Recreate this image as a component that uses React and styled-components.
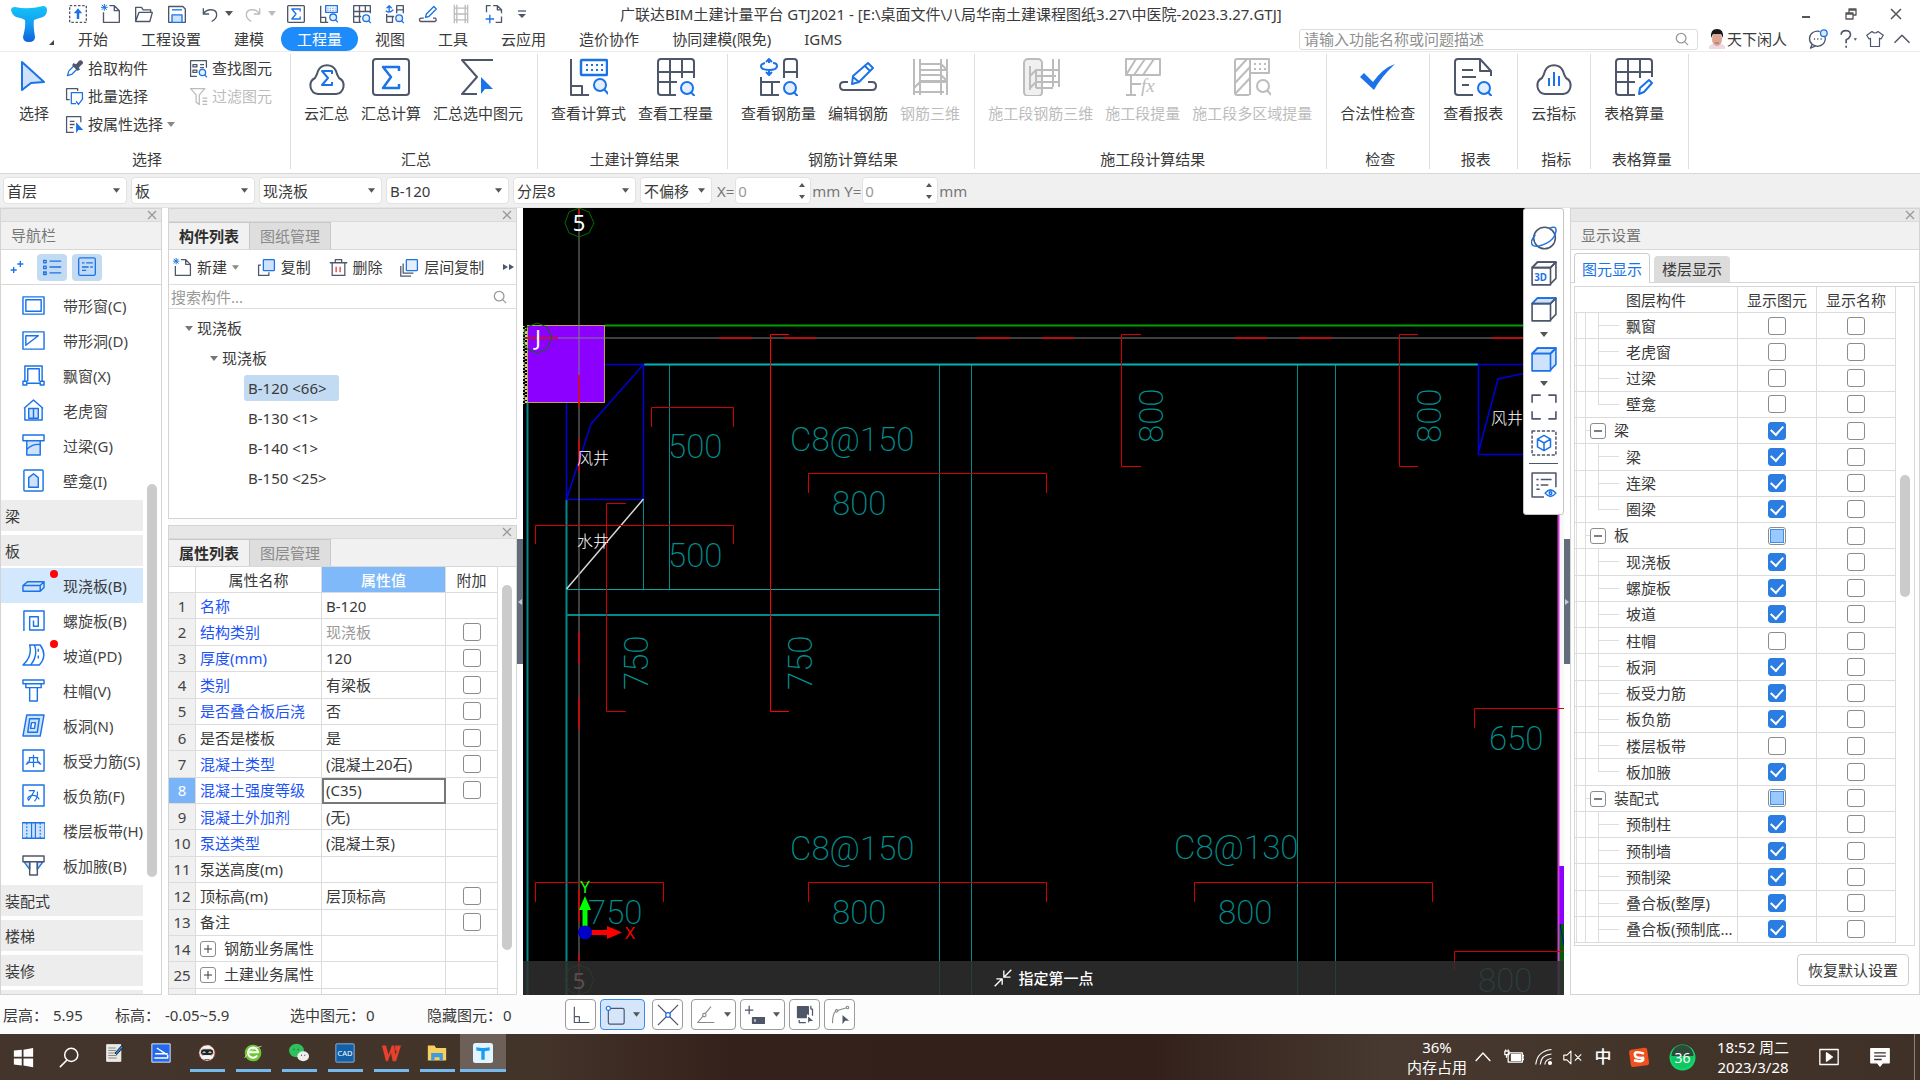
import React from 'react';
import styled, { createGlobalStyle, css } from 'styled-components';

const INK = '#4e566a';
const BLUE = '#1a73e8';
const PALE = '#cfe2fb';
const MUTED = '#bcbcbc';

const GlobalStyle = createGlobalStyle`
  * { box-sizing: border-box; }
  body {
    margin: 0;
    background: #fcfcfc;
    color: #3a3a3a;
    font-family: "Noto Sans", "Noto Sans CJK SC", sans-serif;
    font-size: 15px;
    line-height: 20px;
  }
  button, input, select {
    font: inherit;
    color: inherit;
    margin: 0;
    padding: 0;
    border: 0;
    background: none;
  }
  svg { display: block; flex: none; }
`;

/* ---------- layout ---------- */

const Page = styled.div`
  height: 100vh;
  display: flex;
  flex-direction: column;
  overflow: hidden;
`;

const Header = styled.header`
  display: flex;
  background: #fff;
  border-bottom: 1px solid #ececec;
`;

const LogoButton = styled.button`
  width: 62px;
  height: 51px;
  display: flex;
  align-items: flex-end;
  justify-content: flex-end;
  padding: 0 8px 6px 10px;
`;

const HeaderRows = styled.div`
  flex: 1;
  min-width: 0;
`;

const TitleRow = styled.div`
  height: 27px;
  display: grid;
  grid-template-columns: 558px 1fr 140px;
  align-items: center;
`;

const QuickBar = styled.div`
  display: flex;
  align-items: center;
  height: 24px;
  padding-left: 6px;
`;

const QuickButton = styled.button`
  width: ${p => (p.$w || 33)}px;
  height: 24px;
  display: flex;
  align-items: center;
  color: ${p => (p.$off ? MUTED : INK)};
`;

const WindowTitle = styled.div`
  white-space: nowrap;
`;

const WindowButtons = styled.div`
  display: flex;
  justify-content: space-between;
  padding: 0 18px 0 20px;
  color: #555;
`;

const MenuRow = styled.div`
  height: 24px;
  display: flex;
  align-items: center;
  gap: 1px;
`;

const MenuTab = styled.button`
  height: 24px;
  padding: 0 16px;
  border-radius: 12px;
  white-space: nowrap;
  ${p => p.$active && css`
    background: #1e8bfb;
    color: #fff;
  `}
`;

const UserArea = styled.div`
  display: flex;
  align-items: center;
  margin-left: auto;
  padding-right: 9px;
  color: ${INK};
`;

const SearchBox = styled.label`
  width: 399px;
  height: 21px;
  margin-right: 11px;
  display: flex;
  align-items: center;
  padding: 0 8px 0 4px;
  border: 1px solid #dcdcdc;
  border-radius: 3px;
  color: #999;
  input { flex: 1; outline: 0; }
  input::placeholder { color: #8f8f8f; }
`;

const UserName = styled.a`
  display: flex;
  align-items: center;
  gap: 2px;
  margin-right: 21px;
  color: #3a3a3a;
  text-decoration: none;
`;

const UserIcons = styled.div`
  display: flex;
  align-items: center;
  gap: 9px;
`;

/* ---------- ribbon ---------- */

const Ribbon = styled.div`
  height: 122px;
  display: flex;
  padding: 2px 0 4px;
  background: #fff;
  border-bottom: 1px solid #d8d8d8;
`;

const RibbonGroup = styled.section`
  min-width: ${p => p.$min || 0}px;
  display: flex;
  flex-direction: column;
  justify-content: space-between;
  padding: 0 8px 0 7px;
  border-right: 1px solid #dedede;
`;

const RibbonItems = styled.div`
  display: flex;
`;

const RibbonButton = styled.button`
  display: flex;
  flex-direction: column;
  align-items: center;
  gap: 7px;
  padding: 4px 6px 0;
  white-space: nowrap;
  color: ${p => (p.disabled ? MUTED : '#3a3a3a')};
`;

const SelectTools = styled(RibbonItems)`
  padding-left: 2px;
`;

const GroupLabel = styled.div`
  text-align: center;
  padding-left: 5px;
`;

const SmallGrid = styled.div`
  display: grid;
  grid-template-columns: 124px 90px;
  grid-auto-rows: 28px;
  align-items: center;
  padding-left: 6px;
`;

const SmallButton = styled.button`
  display: flex;
  align-items: center;
  gap: 4px;
  white-space: nowrap;
  color: ${p => (p.disabled ? MUTED : '#3a3a3a')};
`;

/* ---------- option bar ---------- */

const OptionBar = styled.div`
  height: 34px;
  display: flex;
  align-items: center;
  padding: 0 3px;
  gap: 4px;
  background: #f0f0f0;
  border-bottom: 1px solid #e4e4e4;
`;

const Field = styled.label`
  width: ${p => p.$w}px;
  height: 27px;
  display: flex;
  align-items: center;
  padding: 0 6px 0 3px;
  background: #fff;
  border: 1px solid #e2e2e2;
  border-radius: 4px;
  color: ${p => (p.$dim ? '#999' : '#3a3a3a')};
  select, input { flex: 1; min-width: 0; appearance: none; outline: 0; }
`;

const SpinField = styled(Field)`
  padding: 0 0 0 2px;
`;

const Unit = styled.span`
  margin: 0 -3px;
  color: #777;
`;

/* ---------- panels ---------- */

const Workspace = styled.main`
  flex: 1;
  min-height: 0;
  display: flex;
`;

const Splitter = styled.div`
  width: 6px;
  flex: none;
  display: flex;
  align-items: center;
  background: #fff;
`;

const SplitHandle = styled.button`
  width: 6px;
  height: 125px;
  background: #626d7b;
`;

const PanelColumn = styled.div`
  width: ${p => p.$w}px;
  flex: none;
  display: flex;
  flex-direction: column;
  gap: 6px;
`;

const Panel = styled.section`
  flex: ${p => (p.$fill ? '1 1 0' : 'none')};
  min-height: 0;
  display: flex;
  flex-direction: column;
  overflow: hidden;
  background: #fff;
  border: 1px solid #d4d4d4;
`;

const CloseStrip = styled.div`
  height: 13px;
  flex: none;
  display: flex;
  align-items: center;
  justify-content: flex-end;
  padding-right: 4px;
  background: #e7e7e7;
  border-bottom: 1px solid #dadada;
  color: #999;
`;

const PanelTitle = styled.div`
  height: 28px;
  flex: none;
  padding: 3px 10px;
  background: #f1f1f1;
  border-bottom: 1px solid #d8d8d8;
  color: #777;
`;

const TabStrip = styled.div`
  height: 28px;
  flex: none;
  display: flex;
  background: #f1f1f1;
  border-bottom: 1px solid #d8d8d8;
`;

const PanelTab = styled.button`
  width: 81px;
  color: ${p => (p.$active ? '#2e2e2e' : '#8a8a8a')};
  font-weight: ${p => (p.$active ? 700 : 400)};
  background: ${p => (p.$active ? '#f1f1f1' : '#dedede')};
  border: solid #c6c9cc;
  border-width: 1px 1px 0 0;
`;

const NavTools = styled.div`
  height: 35px;
  flex: none;
  display: flex;
  align-items: center;
  gap: 5px;
  padding-left: 1px;
  border-bottom: 1px solid #d8d8d8;
`;

const NavTool = styled.button`
  width: 30px;
  height: 27px;
  display: grid;
  place-items: center;
  border-radius: 4px;
  background: ${p => (p.$active ? '#c3daf3' : 'none')};
  color: ${BLUE};
`;

const ScrollArea = styled.div`
  flex: 1;
  min-height: 0;
  display: flex;
  overflow: hidden;
`;

const NavList = styled.nav`
  width: 143px;
  display: flex;
  flex-direction: column;
  padding-top: 3px;
`;

const NavCategory = styled.button`
  flex: none;
  height: 31px;
  margin: 2px 0;
  padding-left: 4px;
  text-align: left;
  background: #ededed;
`;

const NavItem = styled.button`
  flex: none;
  height: 35px;
  display: flex;
  align-items: center;
  gap: 18px;
  padding-left: 21px;
  white-space: nowrap;
  color: ${p => (p.$active ? '#3a3a3a' : '#444')};
  background: ${p => (p.$active ? '#d3e7fd' : 'none')};
`;

const NavIconBox = styled.span`
  position: relative;
`;

const RedDot = styled.span`
  position: absolute;
  top: -4px;
  right: -13px;
  width: 8px;
  height: 8px;
  border-radius: 50%;
  background: #fb0505;
`;

const ScrollTrack = styled.div`
  width: ${p => p.$w}px;
  flex: none;
  display: flex;
  flex-direction: column;
  align-items: center;
  padding-top: ${p => p.$top}px;
`;

const ScrollThumb = styled.div`
  width: 10px;
  height: ${p => p.$h}px;
  border-radius: 5px;
  background: #cbcbcb;
`;

const ListTools = styled.div`
  height: 35px;
  display: flex;
  align-items: center;
  justify-content: space-between;
  padding: 0 2px 0 4px;
  border-bottom: 1px solid #dedede;
`;

const ListTool = styled.button`
  display: flex;
  align-items: center;
  gap: 5px;
  white-space: nowrap;
`;

const ListSearch = styled.label`
  height: 24px;
  display: flex;
  align-items: center;
  padding: 0 9px 0 2px;
  border-bottom: 1px solid #dedede;
  color: #999;
  input { flex: 1; outline: 0; }
  input::placeholder { color: #999; }
`;

const Tree = styled.ul`
  height: 209px;
  margin: 0;
  padding: 4px 0 0;
  list-style: none;
`;

const TreeRow = styled.li`
  height: 30px;
  display: flex;
  align-items: center;
  gap: 4px;
  padding-left: ${p => p.$indent}px;
`;

const TreeLeaf = styled.button`
  height: 26px;
  padding: 0 12px 0 4px;
  border-radius: 3px;
  background: ${p => (p.$active ? '#c3daf3' : 'none')};
`;

const gridTable = css`
  border-collapse: separate;
  border-spacing: 0;
  table-layout: fixed;
  th, td {
    height: 26px;
    padding: 0;
    font-weight: 400;
    line-height: 20px;
    white-space: nowrap;
    border: solid #dcdcdc;
    border-width: 0 1px 1px 0;
  }
`;

const PropTable = styled.table`
  ${gridTable}
  width: 329px;
  height: 448px;
  flex: none;
  td { padding-left: 4px; text-align: left; }
`;

const RowNo = styled.th`
  background: ${p => (p.$active ? '#7ab4f8' : '#f0f0f0')};
  color: ${p => (p.$active ? '#fff' : '#444')};
`;

const SelectedHead = styled.th`
  && {
    background: #80b9f9;
    color: #fff;
    font-weight: 500;
  }
`;

const PropName = styled.td`
  color: ${p => (p.$link ? '#1c54f5' : '#3a3a3a')};
`;

const PropValue = styled.td`
  color: ${p => (p.$dim ? '#999' : '#3a3a3a')};
  ${p => p.$editing && css`outline: 2px solid #777; outline-offset: -2px;`}
`;

const CheckCell = styled.td`
  && { padding: 0; }
`;

const Expander = styled.button`
  width: 16px;
  height: 16px;
  display: inline-grid;
  place-items: center;
  vertical-align: middle;
  margin: 0 8px 2px ${p => p.$ml || 0}px;
  border: 1px solid #8c8c8c;
  border-radius: 3px;
  background: #fff;
`;

const Check = styled.input.attrs({ type: 'checkbox' })`
  && {
    appearance: none;
    width: 18px;
    height: 18px;
    display: grid;
    place-items: center;
    margin: 0 auto;
    border: 1px solid #8c8c8c;
    border-radius: 3px;
    background: #fff;
  }
  &&:checked {
    background: #2b7de1;
    border-color: #2b7de1;
  }
  &:checked::after {
    content: "";
    width: 6px;
    height: 10px;
    margin-bottom: 3px;
    border: solid #fff;
    border-width: 0 2px 2px 0;
    transform: rotate(42deg);
  }
  ${p => p.$mixed && css`
    &::after {
      content: "";
      width: 12px;
      height: 12px;
      background: #99c9ff;
      border: 1px solid #3f8ff0;
    }
  `}
`;

const DisplayTabs = styled.div`
  height: 33px;
  flex: none;
  display: flex;
  align-items: flex-end;
  gap: 4px;
  padding-left: 3px;
  border-bottom: 1px solid #d4d7da;
`;

const DisplayTab = styled.button`
  width: 76px;
  height: ${p => (p.$active ? 30 : 26)}px;
  border-radius: 4px 4px 0 0;
  ${p => p.$active ? css`
    margin-bottom: -1px;
    background: #fff;
    border: 1px solid #c9cdd2;
    border-bottom: 0;
    color: ${BLUE};
  ` : css`
    background: #dcdcdc;
  `}
`;

const DisplayBox = styled.div`
  flex: 1;
  min-height: 0;
  display: flex;
  overflow: hidden;
  margin: 3px 4px 0 3px;
  border: 1px solid #d8d8d8;
`;

const DisplayTable = styled.table`
  ${gridTable}
  flex: 1;
  height: 656px;
`;

const line = 'linear-gradient(#dedede, #dedede)';

const LayerCell = styled.td`
  && {
    overflow: hidden;
    text-overflow: ellipsis;
    padding-left: ${p => (p.$parent ? 14 : 51)}px;
    background:
      ${line} 1px 0 / 1px 100% no-repeat,
      ${line} 10px 0 / 1px 100% no-repeat,
      ${p => p.$parent
        ? `${line} 10px 50% / 6px 1px no-repeat`
        : `${line} 23px 0 / 1px ${p.$last ? '50%' : '100%'} no-repeat, ${line} 23px 50% / 21px 1px no-repeat`};
  }
`;

const PanelFooter = styled.div`
  flex: none;
  display: flex;
  justify-content: flex-end;
  padding: 8px 10px;
`;

const ResetButton = styled.button`
  height: 32px;
  padding: 0 10px;
  border: 1px solid #cfcfcf;
  border-radius: 4px;
  background: #fff;
`;

/* ---------- drawing area ---------- */

const CanvasArea = styled.div`
  position: relative;
  flex: 1;
  min-width: 0;
  overflow: hidden;
  background: #000;
`;

const Drawing = styled.svg`
  width: 100%;
  height: 100%;
`;

const PromptBar = styled.div`
  position: absolute;
  inset: auto 0 0 0;
  height: 34px;
  display: flex;
  align-items: center;
  justify-content: center;
  gap: 5px;
  background: rgba(48, 48, 48, 0.84);
  color: #fff;
  font-weight: 500;
`;

const ViewBar = styled.div`
  position: absolute;
  top: 0;
  right: 0;
  width: 41px;
  height: 307px;
  display: flex;
  flex-direction: column;
  align-items: center;
  padding-top: 12px;
  background: #fff;
  border: 1px solid #c4c4c4;
  border-radius: 3px;
`;

const ViewButton = styled.button`
  height: ${p => p.$h}px;
  display: grid;
  place-items: center;
  color: ${INK};
`;

const Rule = styled.hr`
  width: 29px;
  margin: 1px 0 5px;
  border: 0;
  border-top: 1px solid ${INK};
`;

/* ---------- bottom bars ---------- */

const StatusBar = styled.footer`
  height: 39px;
  flex: none;
  display: flex;
  align-items: center;
  background: #fcfcfc;
  padding-left: 3px;
`;

const StatusItem = styled.div`
  width: ${p => p.$w}px;
  display: flex;
  gap: ${p => p.$gap || 5}px;
  white-space: nowrap;
`;

const SnapTools = styled.div`
  display: flex;
  gap: 4px;
`;

const SnapButton = styled.button`
  width: ${p => (p.$menu ? 45 : 31)}px;
  height: 31px;
  display: flex;
  align-items: center;
  justify-content: space-around;
  margin-right: ${p => p.$after || 0}px;
  border: 1px solid ${p => (p.$active ? '#3c8af0' : '#9b9b9b')};
  border-radius: 4px;
  background: ${p => (p.$active ? '#d5e6fb' : '#fff')};
  color: ${INK};
`;

const Taskbar = styled.footer`
  height: 46px;
  flex: none;
  display: flex;
  align-items: center;
  background: linear-gradient(90deg, #43352b 0, #43342a 28%, #35211b 38%, #33201b 60%, #47392f 72%, #43342a 86%, #3f3127 100%);
  color: #fff;
`;

const TaskButton = styled.button`
  width: 46px;
  height: 38px;
  align-self: flex-start;
  display: flex;
  flex-direction: column;
  align-items: center;
  justify-content: space-between;
  padding-top: ${p => (p.$low ? 13 : 9)}px;
  background: ${p => (p.$focus ? 'rgba(255,255,255,0.22)' : 'none')};
`;

const Running = styled.span`
  width: ${p => (p.$full ? 46 : 35)}px;
  height: 3px;
  background: #76b9ed;
`;

const Tray = styled.div`
  margin-left: auto;
  display: flex;
  align-items: center;
  padding-right: 5px;
`;

const TrayItem = styled.button`
  width: ${p => p.$w}px;
  display: grid;
  justify-items: center;
  line-height: 20px;
  white-space: nowrap;
  color: #fff;
`;

const ImeItem = styled(TrayItem)`
  font-size: 17px;
  font-weight: 500;
`;

const TrayEdge = styled.span`
  height: 46px;
  margin-left: 12px;
  border-left: 1px solid #8a8178;
`;

/* ---------- icons ---------- */

const Svg = ({ s = 20, box = 24, w = 1.6, c = 'currentColor', children, ...rest }) => (
  <svg width={s} height={s} viewBox={`0 0 ${box} ${box}`} fill="none" stroke={c} strokeWidth={w} strokeLinejoin="round" aria-hidden="true" {...rest}>
    {children}
  </svg>
);

const Caret = ({ c = '#555', s = 8 }) => (
  <svg width={s} height={5} viewBox="0 0 8 5" aria-hidden="true">
    <path d="M0 0h8L4 5z" fill={c} />
  </svg>
);

const Cross = () => <Svg s={10} box={10} w={1.3}><path d="M1 1l8 8M9 1l-8 8" /></Svg>;

const Lens = ({ s = 14 }) => <Svg s={s} box={16} w={1.5}><circle cx="7" cy="7" r="5.5" /><path d="M11 11l4 4" /></Svg>;

const glass = (x, y, r, c = BLUE, f = '#e3effd') => (
  <g stroke={c}><circle cx={x} cy={y} r={r} fill={f} /><path d={`M${x + r * 0.7} ${y + r * 0.75}l${r * 0.7} ${r * 0.75}`} /></g>
);

const Logo = () => (
  <svg width="40" height="40" viewBox="0 0 40 40" aria-hidden="true">
    <defs>
      <linearGradient id="logo" x1="0" y1="0" x2="0" y2="1">
        <stop offset="0" stopColor="#14c3f6" /><stop offset="0.5" stopColor="#159df2" /><stop offset="1" stopColor="#0c62dc" />
      </linearGradient>
    </defs>
    <path d="M2 5Q2 2 6 2Q19 5 34 1Q38 1 38 5Q38 10 34 12Q27 14 25 15Q24 20 26 32Q26 37 20 37Q14 37 14 32Q17 21 16 15Q13 13 7 12Q3 10 2 5Z" fill="url(#logo)" />
  </svg>
);

const Corner = () => <svg width="5" height="5" aria-hidden="true"><path d="M5 0v5H0z" fill="#444" /></svg>;

const quick = {
  export: <><rect x="2" y="2" width="20" height="20" strokeDasharray="3 2" /><path d="M12 18V10" stroke={BLUE} strokeWidth="3" /><path d="M7 11l5-6 5 6z" fill={BLUE} stroke="none" /></>,
  fresh: <><path d="M10 2h6l6 6v14H3V10M16 2v6h6" /><path d="M1 1l6 6M7 1L1 7M4 0v8M0 4h8" stroke={BLUE} strokeWidth="1.2" /></>,
  open: <><path d="M2 21V4h7l2 3h9v3M2 21l4-11h16l-3 11z" /></>,
  save: <><path d="M3 3h16l3 3v16H2V3z" /><rect x="6" y="13" width="12" height="9" fill={PALE} stroke={BLUE} /><path d="M6 7h12" stroke={BLUE} /></>,
  undo: <path d="M4 5v7h7M4 12C8 5 20 5 20 13q0 5-6 8" />,
  redo: <path d="M20 5v7h-7M20 12C16 5 4 5 4 13q0 5 6 8" />,
  sum: <><rect x="2" y="2" width="20" height="20" rx="1" /><path d="M17 9V6H7l5 6-5 6h10v-3" stroke={BLUE} /></>,
  formula: <><path d="M2 2v20h9M2 16h6v6" /><rect x="8" y="2" width="14" height="8" stroke={BLUE} /><path d="M10 5h10M10 7.500h10" stroke={BLUE} strokeDasharray="1.5 1.500" strokeWidth="1" />{glass(17, 16, 4)}</>,
  grid: <><path d="M11 22H2V2h20v9M2 9h20M2 15h9M9 2v20M16 2v8" />{glass(17, 17, 4)}</>,
  rebar: <><path d="M14 11V2h8v9M14 7h8M2 12v10M2 15h9M9 15v7H2" /><path d="M5 2v8M2 5l3-3 3 3M1 8q4 4 9-1" stroke={BLUE} />{glass(17, 17, 4)}</>,
  edit: <><path d="M7 17H4q-3 0-2 3l1 1h17q3-1 1-4h-3" /><path d="M9 16l1-4 9-9 3 3-9 9z" stroke={BLUE} /></>,
  bars: <path d="M4 1v22M7 1v22M17 1v22M20 1v22M4 5h16M4 12h16M4 19h16" />,
  area: <><path d="M3 10V2h5M11 2h5l5 5v4M21 15v7h-7M16 2v5h5" /><path d="M7 13v10M2 18h10" stroke={BLUE} /></>,
};

const Q = ({ n }) => <Svg s={20}>{quick[n]}</Svg>;

const cloud = <path d="M10 36a8.500 8.500 0 0 1-3-16q2-3 3-7a10 10 0 0 1 18 0q1 4 3 7a8.500 8.500 0 0 1-3 16z" />;

const big = {
  cursor: <path d="M7 4v28l9-7 13-1z" fill={PALE} stroke={BLUE} />,
  cloudSum: <>{cloud}<path d="M24 16v-3H14l6 7-6 7h10v-3" stroke={BLUE} /></>,
  boxSum: <><rect x="1" y="1" width="36" height="36" rx="3" /><path d="M27 13V9H11l8 10-8 11h16v-4" stroke={BLUE} strokeWidth="2.500" /></>,
  sumPick: <><path d="M34 2H3l15 17L3 36h15" /><path d="M22 19v17l4-5h8z" fill={BLUE} stroke="none" /></>,
  formula: <><path d="M1 1v36h18M1 28h11v9" /><rect x="11" y="2" width="26" height="15" rx="1" stroke={BLUE} strokeWidth="2.500" /><path d="M16 7h17M16 12h17" stroke={BLUE} strokeDasharray="2 3" />{glass(30, 27, 6)}</>,
  grid: <><path d="M19 37H4q-3 0-3-3V4q0-3 3-3h30q3 0 3 3v16M1 14h36M1 24h19M13 1v36M25 1v19" />{glass(30, 30, 6)}</>,
  rebar: <><path d="M24 20V4q0-3 3-3h7q3 0 3 3v16M24 14h13M1 19v18h18M1 24h19M12 24v13" /><path d="M9 1v4M9 11v6M6 4l3-3 3 3M6 14l3 3 3-3M5 5q-4 1-4 3 0 4 8 4t8-4q0-3-4-3" stroke={BLUE} />{glass(30, 30, 6)}</>,
  edit: <><path d="M9 24H5q-4 0-4 4t4 4h28q4 0 4-4t-4-4h-4" /><path d="M13 26l1-8L29 5l5 5-14 14zM14 19l6 5M26 8l5 5" stroke={BLUE} /></>,
  bars: <><path d="M3 1v36M9 1v36M30 1v36M36 1v36M9 6h21l6 6H9M9 17h21l6 6H9M3 30l6-6h27M3 34h30" /></>,
  segBars: <><rect x="2" y="1" width="18" height="37" rx="4" fill="#f0f0f0" /><path d="M8 8v24M14 12v18M31 1v28M37 1v28M8 30l6-6h23M8 18l6-6h23M14 18h20M14 30h17" /></>,
  segFx: <><path d="M2 1h34v16H2zM2 17L12 1M10 17L21 1M19 17L30 1M7 17v20M2 37h10M7 26h10" /><text x="17" y="34" fontSize="19" fontStyle="italic" fontFamily="Liberation Serif, serif" fill={MUTED} stroke="none">fx</text></>,
  segMulti: <><path d="M16 37H4q-2 0-2-2V3q0-2 2-2h32v14H17v22M2 14L14 1M2 25L17 9M2 36L17 20M17 1v14" /><path d="M21 6h13M21 11h13" strokeDasharray="2 3" />{glass(30, 28, 6, MUTED, '#fff')}</>,
  check: <path d="M1 19l4-4 9 9Q24 10 36 6Q22 19 15 32z" fill={BLUE} stroke="none" />,
  report: <><path d="M19 37H4q-3 0-3-3V4q0-3 3-3h22l11 12v5M26 1v12h11M8 12h11M8 19h14M8 27h7" />{glass(30, 30, 6)}</>,
  cloudBars: <>{cloud}<path d="M14 20v8M19 14v14M24 18v10" stroke={BLUE} /></>,
  sheet: <><path d="M20 37H4q-3 0-3-3V4q0-3 3-3h30q3 0 3 3v15M1 14h36M1 24h19M13 1v36M25 1v19" /><path d="M24 36l1-6 9-8 3 3-8 9z" stroke={BLUE} /></>,
};

const small = {
  dropper: <><path d="M3 21l2-6 8-8 4 4-8 8z" stroke={BLUE} /><path d="M11 6l7 7-2 1-6-6zM14 8l4-5q3-2 4 2l-6 6z" fill={INK} /></>,
  batch: <><path d="M16 5V2H2v14h4" /><path d="M14 21H8V7h14v8M14 18l3 4 6-8" stroke={BLUE} /></>,
  byProp: <><path d="M11 22H2V2h18v7M6 8h6M6 12h6M6 16h4" /><path d="M14 9v14l3-4h6z" fill={BLUE} stroke="none" /></>,
  find: <><path d="M10 22H2V2h20v9M5 7h5v3H5zM5 14h5v3H5zM14 7h5M14 11h5" />{glass(17, 17, 4)}</>,
  filter: <path d="M2 2h18l-7 8v12l-4-3v-9zM17 14h6M17 18h6M17 22h6" />,
  copy: <><path d="M5 9H2v13h13v-4" /><rect x="8" y="2" width="14" height="14" rx="1" fill={PALE} stroke={BLUE} /></>,
  trash: <><path d="M1 6h22M4 6v16h16V6M8 6V2h8v4" /><path d="M9 11v7M14 11v7" stroke="#e33" /></>,
  floorCopy: <><path d="M4 7v12h13M1 10v13h13" /><rect x="8" y="2" width="14" height="14" rx="1" fill="#e3effd" stroke={BLUE} /></>,
  plus: <path d="M17 3v9M12.500 7.500h9M7 12v9M2.500 16.500h9" strokeWidth="2" />,
  rows: <><path d="M9 5h14M9 12h14M9 19h14" /><path d="M2 4h3v3H2zM2 11h3v3H2zM2 18h3v3H2z" /></>,
  page: <><rect x="2" y="1" width="20" height="21" rx="2" /><path d="M6 7h3M11 7h8M6 12h8M16 12h3M6 16h5" /></>,
};

const nav = {
  stripWindow: <><rect x="1" y="3" width="22" height="18" /><rect x="4" y="6" width="16" height="12" /></>,
  stripHole: <><rect x="1" y="3" width="22" height="18" /><path d="M4 7h13L4 17z" /></>,
  bay: <><path d="M3 18V2h18v16M6 18V5h12v13M1 18h4v4H1zM19 18h4v4h-4zM5 20h14" /></>,
  dormer: <><path d="M2 10L12 1l10 9M3 9v13h18V9" /><rect x="7" y="10" width="10" height="10" fill={PALE} /><path d="M12 10v10" /></>,
  lintel: <><path d="M5 7v15h14V7" fill={PALE} /><rect x="1" y="1" width="22" height="6" fill="#fff" /><path d="M5 16q6-6 14-5" /></>,
  niche: <><rect x="2" y="1" width="20" height="22" rx="1" /><path d="M7 19V9l5-4 5 4v10z" fill={PALE} /></>,
  slab: <><path d="M1 12l5-4h17l-4 4zM1 12v6h18v-6M19 18l4-4V8" fill={PALE} /></>,
  spiral: <path d="M2 23V2h21v20H8V8h9v10h-5v-6" />,
  ramp: <path d="M8 1h11q8 11-1 21H1Q11 13 8 1zM13 1q4 11-4 21M17 5v3M17 12v3" />,
  cap: <path d="M1 1h22v4H1zM4 5v4h16V5M8 9v14h8V9" />,
  hole: <><path d="M5 1h18l-4 22H1z" fill={PALE} /><path d="M8 5h10l-2 14H6z" /><path d="M10 9h4l-1 6H9z" fill="#fff" /></>,
  rebarS: <><rect x="1" y="1" width="22" height="22" /><path d="M7 9h10M5 14h14M12 6v13M8 9q0 6-4 7M16 9q0 6 4 7" strokeWidth="1.300" /></>,
  rebarF: <><rect x="1" y="1" width="22" height="22" /><path d="M7 7h6L7 17q-3-3 3-5 5-1 8 4M16 8q1 6-3 10" strokeWidth="1.300" /></>,
  band: <><rect x="0" y="4" width="24" height="16" rx="1" fill={PALE} /><path d="M5 4v16M19 4v16" strokeDasharray="2 1.500" strokeWidth="1.200" /><path d="M10 4v16M14 4v16" strokeWidth="1.200" /></>,
  haunch: <><path d="M2 8l6 8V8zM22 8l-6 8V8z" fill={PALE} /><path d="M1 2h22v6H1zM8 8v14h8V8" stroke={INK} /></>,
};

const Cube = ({ fill, top, label, edge }) => (
  <Svg s={26} w={1.5} c={edge || 'currentColor'}>
    <path d="M1 7l5-5h17v15l-5 5" fill={fill || 'none'} />
    <path d="M1 7l5-5h17l-5 5z" fill={top || 'none'} stroke={top ? BLUE : undefined} />
    <path d="M1 7h17v16H1zM18 7l5-5" fill={fill || 'none'} />
    {label && <text x="3" y="19" fontSize="9" fontWeight="700" fill={BLUE} stroke="none">{label}</text>}
  </Svg>
);

/* ---------- data ---------- */

const ribbonGroups = [
  { label: '汇总', items: [['cloudSum', '云汇总'], ['boxSum', '汇总计算'], ['sumPick', '汇总选中图元']] },
  { label: '土建计算结果', items: [['formula', '查看计算式'], ['grid', '查看工程量']] },
  { label: '钢筋计算结果', items: [['rebar', '查看钢筋量'], ['edit', '编辑钢筋'], ['bars', '钢筋三维', true]] },
  { label: '施工段计算结果', items: [['segBars', '施工段钢筋三维', true], ['segFx', '施工段提量', true], ['segMulti', '施工段多区域提量', true]] },
  { label: '检查', items: [['check', '合法性检查']] },
  { label: '报表', items: [['report', '查看报表']] },
  { label: '指标', items: [['cloudBars', '云指标']] },
  { label: '表格算量', items: [['sheet', '表格算量']], min: 98 },
];

const menus = ['开始', '工程设置', '建模', '工程量', '视图', '工具', '云应用', '造价协作', '协同建模(限免)', 'IGMS'];

const navRows = [
  ['stripWindow', '带形窗(C)'], ['stripHole', '带形洞(D)'], ['bay', '飘窗(X)'], ['dormer', '老虎窗'],
  ['lintel', '过梁(G)'], ['niche', '壁龛(I)'], [null, '梁'], [null, '板'],
  ['slab', '现浇板(B)', true], ['spiral', '螺旋板(B)'], ['ramp', '坡道(PD)', true], ['cap', '柱帽(V)'],
  ['hole', '板洞(N)'], ['rebarS', '板受力筋(S)'], ['rebarF', '板负筋(F)'], ['band', '楼层板带(H)'],
  ['haunch', '板加腋(B)'], [null, '装配式'], [null, '楼梯'], [null, '装修'], [null, ''],
];

// no, name, value, blue name, has checkbox
const props = [
  [1, '名称', 'B-120', true, false],
  [2, '结构类别', '现浇板', true, true],
  [3, '厚度(mm)', '120', true, true],
  [4, '类别', '有梁板', true, true],
  [5, '是否叠合板后浇', '否', true, true],
  [6, '是否是楼板', '是', false, true],
  [7, '混凝土类型', '(混凝土20石)', true, true],
  [8, '混凝土强度等级', '(C35)', true, true],
  [9, '混凝土外加剂', '(无)', true, false],
  [10, '泵送类型', '(混凝土泵)', true, false],
  [11, '泵送高度(m)', '', false, false],
  [12, '顶标高(m)', '层顶标高', false, true],
  [13, '备注', '', false, true],
  [14, '钢筋业务属性', '', false, false],
  [25, '土建业务属性', '', false, false],
];

// name, state: 0 off, 1 on, 2 partly
const layers = [
  ['飘窗', 0], ['老虎窗', 0], ['过梁', 0], ['壁龛', 0],
  ['梁', 1, true], ['梁', 1], ['连梁', 1], ['圈梁', 1],
  ['板', 2, true], ['现浇板', 1], ['螺旋板', 1], ['坡道', 1], ['柱帽', 0], ['板洞', 1],
  ['板受力筋', 1], ['板负筋', 1], ['楼层板带', 0], ['板加腋', 1],
  ['装配式', 2, true], ['预制柱', 1], ['预制墙', 1], ['预制梁', 1], ['叠合板(整厚)', 1], ['叠合板(预制底...', 1],
];

/* ---------- parts ---------- */

const TopHeader = () => (
  <Header>
    <LogoButton aria-label="应用菜单"><Logo /><Corner /></LogoButton>
    <HeaderRows>
      <TitleRow>
        <QuickBar>
          <QuickButton aria-label="导出"><Q n="export" /></QuickButton>
          <QuickButton aria-label="新建"><Q n="fresh" /></QuickButton>
          <QuickButton aria-label="打开"><Q n="open" /></QuickButton>
          <QuickButton aria-label="保存"><Q n="save" /></QuickButton>
          <QuickButton $w={25} aria-label="撤销"><Q n="undo" /></QuickButton>
          <QuickButton $w={18} aria-label="撤销列表"><Caret /></QuickButton>
          <QuickButton $off $w={25} aria-label="恢复"><Q n="redo" /></QuickButton>
          <QuickButton $off $w={18} aria-label="恢复列表"><Caret c={MUTED} /></QuickButton>
          {['sum', 'formula', 'grid', 'rebar', 'edit', 'bars', 'area'].map(n => (
            <QuickButton key={n} $off={n === 'bars'} aria-label={n}><Q n={n} /></QuickButton>
          ))}
          <QuickButton $w={16} aria-label="更多">
            <Svg s={10} box={10} w={1.3}><path d="M1 2h8" /><path d="M1 5h8l-4 4z" fill={INK} stroke="none" /></Svg>
          </QuickButton>
        </QuickBar>
        <WindowTitle>广联达BIM土建计量平台 GTJ2021 - [E:\桌面文件\八局华南土建课程图纸3.27\中医院-2023.3.27.GTJ]</WindowTitle>
        <WindowButtons>
          <button aria-label="最小化"><Svg s={12} box={12} w={2}><path d="M2 9h8" /></Svg></button>
          <button aria-label="还原"><Svg s={12} box={12} w={1.3}><path d="M1 5h7v6H1zM4 5V1h7v6H8M1 6h7M4 2h7" /></Svg></button>
          <button aria-label="关闭"><Svg s={12} box={12} w={1.5}><path d="M1 1l10 10M11 1L1 11" /></Svg></button>
        </WindowButtons>
      </TitleRow>
      <MenuRow>
        {menus.map(m => <MenuTab key={m} $active={m === '工程量'}>{m}</MenuTab>)}
        <UserArea>
          <SearchBox>
            <input type="text" aria-label="搜索功能" placeholder="请输入功能名称或问题描述" />
            <Lens />
          </SearchBox>
          <UserName href="#user">
            <svg width="16" height="20" viewBox="0 0 16 20" aria-hidden="true">
              <path d="M0 20v-3l5-3h6l5 3v3z" fill="#ecd9e2" />
              <ellipse cx="8" cy="10" rx="5" ry="7" fill="#dca692" />
              <path d="M2 9Q1 0 8 0t6 9L12 5H4z" fill="#17181c" />
              <path d="M6 14h4" stroke="#b65a55" />
            </svg>
            天下闲人
          </UserName>
          <UserIcons>
            <Svg s={20}><path d="M20 8a9.500 9 0 1 1-6-5M5 18l-2 5 7-3" /><path d="M7 12h1.500M11 12h1.500M15 12h1.500" strokeWidth="2" /><circle cx="19" cy="5" r="4" stroke={BLUE} fill="#dbe9fc" /></Svg>
            <Svg s={20}><path d="M5 7q0-5 6-5t5 6q-1 3-5 5v4M11 20v2.500" strokeWidth="2" /><path d="M20 11h4l-2 3z" fill={INK} stroke="none" /></Svg>
            <Svg s={18}><path d="M8 2q4 4 8 0l7 5-3 5-2-1v11H6V11l-2 1-3-5z" /></Svg>
            <Svg s={18}><path d="M2 17L12 7l10 10" strokeWidth="2" /></Svg>
          </UserIcons>
        </UserArea>
      </MenuRow>
    </HeaderRows>
  </Header>
);

const SmallTool = ({ icon, off, children }) => (
  <SmallButton disabled={off}><Svg s={19} c={off ? MUTED : INK}>{small[icon]}</Svg>{children}</SmallButton>
);

const RibbonBar = () => (
  <Ribbon>
    <RibbonGroup $min={291}>
      <SelectTools>
        <RibbonButton><Svg s={38} box={38} w={2}>{big.cursor}</Svg>选择</RibbonButton>
        <SmallGrid>
          <SmallTool icon="dropper">拾取构件</SmallTool>
          <SmallTool icon="find">查找图元</SmallTool>
          <SmallTool icon="batch">批量选择</SmallTool>
          <SmallTool icon="filter" off>过滤图元</SmallTool>
          <SmallTool icon="byProp">按属性选择 <Caret c="#888" /></SmallTool>
        </SmallGrid>
      </SelectTools>
      <GroupLabel>选择</GroupLabel>
    </RibbonGroup>
    {ribbonGroups.map(g => (
      <RibbonGroup key={g.label} $min={g.min}>
        <RibbonItems>
          {g.items.map(([icon, text, off]) => (
            <RibbonButton key={icon} disabled={off}>
              <Svg s={38} box={38} w={2} c={off ? MUTED : INK}>{big[icon]}</Svg>
              {text}
            </RibbonButton>
          ))}
        </RibbonItems>
        <GroupLabel>{g.label}</GroupLabel>
      </RibbonGroup>
    ))}
  </Ribbon>
);

const Drop = ({ w, label, value }) => (
  <Field $w={w}>
    <select aria-label={label} defaultValue={value}><option>{value}</option></select>
    <Caret s={7} />
  </Field>
);

const Spin = ({ label }) => (
  <SpinField $w={76} $dim>
    <input type="text" aria-label={label} defaultValue="0" />
    <Svg s={16} box={16} w={0}><path d="M5 4h6L8 0zM5 12h6l-3 4z" fill="#555" /></Svg>
  </SpinField>
);

const Options = () => (
  <OptionBar>
    <Drop w={124} label="楼层" value="首层" />
    <Drop w={124} label="类别" value="板" />
    <Drop w={123} label="类型" value="现浇板" />
    <Drop w={123} label="构件" value="B-120" />
    <Drop w={123} label="分层" value="分层8" />
    <Drop w={72} label="偏移" value="不偏移" />
    <Unit>&nbsp;X=</Unit>
    <Spin label="X" />
    <Unit>mm Y=</Unit>
    <Spin label="Y" />
    <Unit>mm</Unit>
  </OptionBar>
);

const Navigator = () => (
  <PanelColumn $w={162}>
    <Panel $fill>
      <CloseStrip><Cross /></CloseStrip>
      <PanelTitle>导航栏</PanelTitle>
      <NavTools>
        <NavTool aria-label="添加"><Svg s={16}>{small.plus}</Svg></NavTool>
        <NavTool $active aria-label="列表"><Svg s={20}>{small.rows}</Svg></NavTool>
        <NavTool $active aria-label="详情"><Svg s={20}>{small.page}</Svg></NavTool>
      </NavTools>
      <ScrollArea>
        <NavList>
          {navRows.map(([icon, text, dot]) => icon ? (
            <NavItem key={text} $active={icon === 'slab'}>
              <NavIconBox>
                <Svg s={23} w={1.5} c={BLUE}>{nav[icon]}</Svg>
                {dot && <RedDot />}
              </NavIconBox>
              {text}
            </NavItem>
          ) : <NavCategory key={text}>{text}</NavCategory>)}
        </NavList>
        <ScrollTrack $w={18} $top={199}><ScrollThumb $h={393} /></ScrollTrack>
      </ScrollArea>
    </Panel>
  </PanelColumn>
);

const ComponentList = () => (
  <Panel>
    <CloseStrip><Cross /></CloseStrip>
    <TabStrip><PanelTab $active>构件列表</PanelTab><PanelTab>图纸管理</PanelTab></TabStrip>
    <ListTools>
      <ListTool><Svg s={19} c={INK}>{quick.fresh}</Svg>新建<Caret c="#888" s={7} /></ListTool>
      <ListTool><Svg s={19} c={INK}>{small.copy}</Svg>复制</ListTool>
      <ListTool><Svg s={19} c={INK}>{small.trash}</Svg>删除</ListTool>
      <ListTool><Svg s={19} c={INK}>{small.floorCopy}</Svg>层间复制</ListTool>
      <ListTool aria-label="更多"><Svg s={12} box={12} w={0}><path d="M1 3l5 3-5 3zM7 3l5 3-5 3z" fill={INK} /></Svg></ListTool>
    </ListTools>
    <ListSearch><input type="text" aria-label="搜索构件" placeholder="搜索构件..." /><Lens /></ListSearch>
    <Tree>
      <TreeRow $indent={16}><Caret c="#777" />现浇板</TreeRow>
      <TreeRow $indent={41}><Caret c="#777" />现浇板</TreeRow>
      {['B-120 <66>', 'B-130 <1>', 'B-140 <1>', 'B-150 <25>'].map((t, i) => (
        <TreeRow key={t} $indent={75}><TreeLeaf $active={i === 0}>{t}</TreeLeaf></TreeRow>
      ))}
    </Tree>
  </Panel>
);

const PropertyList = () => (
  <Panel $fill>
    <CloseStrip><Cross /></CloseStrip>
    <TabStrip><PanelTab $active>属性列表</PanelTab><PanelTab>图层管理</PanelTab></TabStrip>
    <ScrollArea>
      <PropTable>
        <colgroup><col width="27" /><col width="126" /><col width="124" /><col width="52" /></colgroup>
        <thead>
          <tr><th /><th>属性名称</th><SelectedHead>属性值</SelectedHead><th>附加</th></tr>
        </thead>
        <tbody>
          {props.map(([no, name, value, link, box]) => (
            <tr key={no}>
              <RowNo $active={no === 8}>{no}</RowNo>
              <PropName $link={link}>{no > 13 && <Expander aria-label="展开"><Svg s={8} box={8} w={1}><path d="M0 4h8M4 0v8" /></Svg></Expander>}{name}</PropName>
              <PropValue $dim={no === 2} $editing={no === 8}>{value}</PropValue>
              <CheckCell>{box && <Check aria-label={`附加 ${name}`} />}</CheckCell>
            </tr>
          ))}
          <tr><RowNo /><td /><td /><td /></tr>
        </tbody>
      </PropTable>
      <ScrollTrack $w={18} $top={18}><ScrollThumb $h={365} /></ScrollTrack>
    </ScrollArea>
  </Panel>
);

/* ---------- floor plan ---------- */

const Cad = ({ x, y, up, children }) => (
  <text transform={`translate(${x} ${y})${up ? ' rotate(-90)' : ''}`}>{children}</text>
);

const Plan = () => (
  <Drawing aria-label="平面图">
    <g transform="translate(-523 -208)" fill="none" strokeWidth="1">
      <rect x="1559" y="208" width="6" height="658" fill="#f8f8f8" />
      <rect x="1559" y="866" width="6" height="58" fill="#8b00ff" />
      <rect x="1559" y="924" width="6" height="71" fill="#006000" />
      <path d="M1560 924l5 26" stroke="#0000d0" />
      <path d="M1558.500 208V995" stroke="#d13bd6" strokeWidth="2" />

      <path d="M523.500 326v78M526 328v76" stroke="#cfcf9c" strokeWidth="2" strokeDasharray="1 2 3 1 2 2" />
      <rect x="527.500" y="325.500" width="77" height="77" fill="#8b00ff" stroke="#c8a24b" />
      <path d="M605 325.500H1558" stroke="#00a000" strokeWidth="2" />
      <g stroke="#008a8a">
        <path d="M527.500 403V995M566.500 499V995M566 615H939" strokeWidth="2" />
        <path d="M643.500 499V589M669.500 364V589M939.500 364V995M971.500 364V995M1297.500 364V995M1335.500 364V995" />
        <path d="M566 589.500H940" stroke="#00a8a8" />
        <path d="M644 364.500H1478" stroke="#00b5b5" strokeWidth="2" />
      </g>
      <path d="M605 364.500H643.500V499.500H566.500V403M643 365L591 424L567 498M1558 364.500H1478.500V454.500H1558M1478 454L1498 379L1558 366" stroke="#0000d8" strokeWidth="1.500" />
      <path d="M643.500 499L566.500 589" stroke="#d8d8d8" strokeWidth="1.500" />

      <path d="M579 208V995M523 338H1558" stroke="#808080" />
      <path d="M579 208v6M579 375v32M579 439v33M579 632v32M579 697v32M579 889v33M579 954v32M527 338h31M719 338h33M784 338h32M977 338h33M1042 338h32M1235 338h32M1299 338h33M1492 338h32" stroke="#e00000" strokeWidth="1.500" />

      <g stroke="#d40000">
        <path d="M651.500 427V407.500H733.500V427M535.500 544V525.500H733.500V544M808.500 493V473.500H1046.500V493M535.500 902V882.500H663.500V902M808.500 902V882.500H1046.500V902M1194.500 902V882.500H1432.500V902" />
        <path d="M626 503.500H606.500V711.500H626M1141 334.500H1121.500V466.500H1141M1418 334.500H1399.500V466.500H1418M1474.500 728V708.500H1565M1454.500 970V951.500H1565" />
        <path d="M789 334.500H770.500V711.500H789" stroke="#ff0000" />
      </g>

      <g stroke="#007000">
        <path d="M579 208l10 4 5 11-5 10-10 4-10-4-4-10 4-11zM537 323l10 4 5 11-5 11-10 4-10-4-5-11 5-11zM579 965l10 4 5 11-5 11-10 4-10-4-4-11 4-11z" />
      </g>
      <g fill="#fff" fontSize="22" fontFamily="Noto Sans, sans-serif" textAnchor="middle">
        <text x="579" y="231">5</text>
        <text x="538" y="346">J</text>
        <text x="579" y="989">5</text>
      </g>

      <g fill="#009090" fontSize="33" fontFamily="Roboto, sans-serif" fontWeight="200">
        <Cad x={668} y={458}>500</Cad>
        <Cad x={668} y={567}>500</Cad>
        <Cad x={790} y={451}>C8@150</Cad>
        <Cad x={832} y={515}>800</Cad>
        <Cad x={1163} y={443} up>800</Cad>
        <Cad x={1441} y={443} up>800</Cad>
        <Cad x={648} y={690} up>750</Cad>
        <Cad x={812} y={690} up>750</Cad>
        <Cad x={790} y={860}>C8@150</Cad>
        <Cad x={832} y={924}>800</Cad>
        <Cad x={588} y={924}>750</Cad>
        <Cad x={1174} y={859}>C8@130</Cad>
        <Cad x={1218} y={924}>800</Cad>
        <Cad x={1489} y={750}>650</Cad>
        <Cad x={1478} y={992}>800</Cad>
      </g>
      <g fill="#fff" fontSize="16" fontWeight="300" fontFamily="Noto Sans CJK SC, sans-serif">
        <text x="577" y="464">风井</text>
        <text x="577" y="547">水井</text>
        <text x="1491" y="424">风井</text>
      </g>

      <path d="M585 930V908" stroke="#0f0" strokeWidth="5" />
      <path d="M579 910h12l-6-14z" fill="#0f0" />
      <path d="M590 932.500h19" stroke="red" strokeWidth="5" />
      <path d="M607 926v13l15-6.500z" fill="red" />
      <circle cx="585" cy="932.500" r="7" fill="#0000c8" />
      <g fontSize="17" fontFamily="Noto Sans, sans-serif" textAnchor="middle">
        <text x="585" y="893" fill="#0f0">Y</text>
        <text x="630" y="939" fill="red">X</text>
      </g>
    </g>
  </Drawing>
);

const Canvas = () => (
  <CanvasArea>
    <Plan />
    <PromptBar>
      <Svg s={20} w={1.6}><path d="M2 22l9-9M4 13h7v7M22 2l-9 9M13 3v8h8" /></Svg>
      指定第一点
    </PromptBar>
    <ViewBar>
      <ViewButton $h={34} aria-label="动态观察"><Svg s={26} w={1.4}><circle cx="12.500" cy="12" r="10" /><path d="M17 3q7-3 6 3-1 7-9 11-8 4-12 2-4-3 2-10" stroke={BLUE} /></Svg></ViewButton>
      <ViewButton $h={36} aria-label="三维"><Cube label="3D" /></ViewButton>
      <ViewButton $h={36} aria-label="俯视"><Cube top={PALE} /></ViewButton>
      <ViewButton $h={14} aria-label="视角列表"><Caret /></ViewButton>
      <ViewButton $h={35} aria-label="实体"><Cube fill={PALE} edge={BLUE} /></ViewButton>
      <ViewButton $h={14} aria-label="实体列表"><Caret /></ViewButton>
      <ViewButton $h={34} aria-label="全屏"><Svg s={26} w={1.5}><path d="M1 8V1h8M16 1h7v7M23 16v7h-7M9 23H1v-7" /></Svg></ViewButton>
      <ViewButton $h={38} aria-label="局部三维"><Svg s={26} w={1.4}><rect x="1" y="1" width="22" height="22" strokeDasharray="3 1.500" /><path d="M12 5l6 3.500v7L12 19l-6-3.500v-7zM6 8.500l6 3.500 6-3.500M12 12v7" stroke={BLUE} /></Svg></ViewButton>
      <Rule />
      <ViewButton $h={32} aria-label="显示设置"><Svg s={26} w={1.4}><path d="M12 23H1V1h22v13M5 7h2M9 7h10M5 12h2M9 12h7M5 16h3" /><path d="M13 19.500q5-6 10 0-5 6-10 0z" stroke={BLUE} /><circle cx="18" cy="19.500" r="1.200" stroke={BLUE} /></Svg></ViewButton>
    </ViewBar>
  </CanvasArea>
);

const DisplaySettings = () => (
  <PanelColumn $w={350}>
    <Panel $fill>
      <CloseStrip><Cross /></CloseStrip>
      <PanelTitle>显示设置</PanelTitle>
      <DisplayTabs><DisplayTab $active>图元显示</DisplayTab><DisplayTab>楼层显示</DisplayTab></DisplayTabs>
      <DisplayBox>
        <DisplayTable>
          <colgroup><col /><col width="79" /><col width="79" /></colgroup>
          <thead><tr><th>图层构件</th><th>显示图元</th><th>显示名称</th></tr></thead>
          <tbody>
            {layers.map(([name, state, parent], i) => (
              <tr key={i}>
                <LayerCell $parent={parent} $last={layers[i + 1] && layers[i + 1][2]}>
                  {parent && <Expander aria-label="折叠" $ml={1}><Svg s={8} box={8} w={1.3}><path d="M0 4h8" /></Svg></Expander>}
                  {name}
                </LayerCell>
                <CheckCell><Check aria-label={`显示图元 ${name}`} defaultChecked={state === 1} $mixed={state === 2} /></CheckCell>
                <CheckCell><Check aria-label={`显示名称 ${name}`} /></CheckCell>
              </tr>
            ))}
          </tbody>
        </DisplayTable>
        <ScrollTrack $w={18} $top={188}><ScrollThumb $h={122} /></ScrollTrack>
      </DisplayBox>
      <PanelFooter><ResetButton>恢复默认设置</ResetButton></PanelFooter>
    </Panel>
  </PanelColumn>
);

const Status = () => (
  <StatusBar>
    <StatusItem $w={112}><span>层高：</span><span>5.95</span></StatusItem>
    <StatusItem $w={175}><span>标高：</span><span>-0.05~5.9</span></StatusItem>
    <StatusItem $w={137} $gap={1}><span>选中图元：</span>0</StatusItem>
    <StatusItem $w={138} $gap={1}><span>隐藏图元：</span>0</StatusItem>
    <SnapTools>
      <SnapButton aria-label="正交"><Svg s={20} w={1.4}><path d="M4 2v19h18M4 14h6v7" /></Svg></SnapButton>
      <SnapButton $menu $active $after={3} aria-label="捕捉"><Svg s={20} w={1.4}><rect x="4" y="4" width="19" height="19" rx="2" /><circle cx="4" cy="4" r="2.500" stroke={BLUE} fill="#fff" /></Svg><Caret s={7} /></SnapButton>
      <SnapButton $after={4} aria-label="交点"><Svg s={22} w={1.4}><path d="M1 1l22 22M23 1L1 23" /><circle cx="12" cy="12" r="2.500" stroke={BLUE} fill="#fff" /></Svg></SnapButton>
      <SnapButton $menu aria-label="角度"><Svg s={20} w={1.3} c="#888"><path d="M18 2L2 21h20" /><circle cx="10" cy="12" r="2" fill="#fff" /></Svg><Caret s={7} /></SnapButton>
      <SnapButton $menu aria-label="动态输入"><Svg s={20} w={1.5}><path d="M5 1v10M0 6h10" /><path d="M9 15h15v7H9z" fill={INK} /><path d="M12 17v3" stroke="#fff" /></Svg><Caret s={7} /></SnapButton>
      <SnapButton aria-label="选择"><Svg s={20} w={1.5}><rect x="3" y="2" width="13" height="13" fill={INK} /><path d="M19 5h2v8M5 18v3h8M19 1v4" /><path d="M15 12v12l3-4h6z" fill={INK} stroke="#fff" /></Svg></SnapButton>
      <SnapButton aria-label="折线"><Svg s={20} w={1.3} c="#888"><path d="M3 22Q3 9 8 7l13-4" /><circle cx="8" cy="7" r="1.500" fill="#fff" /><circle cx="21" cy="3" r="1.500" fill="#fff" /><path d="M15 12v11l3-4h5z" fill={INK} stroke="none" /></Svg></SnapButton>
    </SnapTools>
  </StatusBar>
);

const apps = [
  ['记事本', <><rect x="2" y="2" width="17" height="20" fill="#e9e9e3" /><path d="M4 6h9M4 9h9M4 12h8M4 15h10M4 18h10" stroke="#777" /><path d="M12 12l8-9 2 2-8 9z" fill="#2a7fd4" stroke="#111" /></>, false],
  ['扫描', <><rect x="1" y="1" width="22" height="22" fill="#2468f0" /><path d="M7 6l12 8M5 13h15M4 18h16v-4" stroke="#fff" strokeWidth="1.800" /></>, false],
  ['助手', <><circle cx="12" cy="12" r="9.500" fill="#f5f5f5" stroke="#c9483d" strokeDasharray="5 3" /><rect x="4" y="7" width="16" height="8" rx="4" fill="#1b2534" /><path d="M7 12q1.500-3 3 0M14 12q1.500-3 3 0" stroke="#ffd84a" strokeWidth="1.500" /><path d="M9 20h6" stroke="#333" /></>, true],
  ['浏览器', <><circle cx="12" cy="12" r="10" fill="#6cc832" stroke="none" /><path d="M17 15a6 6 0 1 1 1-4H7" stroke="#fff" strokeWidth="2.500" /><path d="M2 18Q8 7 22 4" stroke="#d8f4b4" /></>, true],
  ['微信', <><ellipse cx="9" cy="9" rx="9" ry="8" fill="#2dc25c" stroke="none" /><ellipse cx="17" cy="16" rx="7" ry="6" fill="#eee" stroke="none" /><path d="M6 7v1.500M11 7v1.500M15 14v1.500M19 14v1.500" stroke="#234" /></>, true],
  ['CAD', <><rect x="1" y="1" width="22" height="22" rx="1" fill="#1260a8" stroke="#9bc3e4" /><text x="12" y="16" fontSize="9" textAnchor="middle" fill="#fff" stroke="none">CAD</text></>, true],
  ['WPS', <><path d="M1 3h5l3 11 4-11h3l1 11 2-5h-2V3h7l-6 19h-4l-2-10-4 10H6z" fill="#e8402c" stroke="none" /></>, true],
  ['文件夹', <><path d="M1 3h8l2 3h12v15H1z" fill="#f8cf5c" stroke="none" /><path d="M5 21v-9h14v9h-4v-4H9v4z" fill="#3f9be0" stroke="none" /></>, true],
];

const WindowsTaskbar = () => (
  <Taskbar>
    <TaskButton $low aria-label="开始"><Svg s={21} w={0}><path d="M1 4l9-1v8H1zM12 3l11-2v10H12zM1 13h9v8l-9-1zM12 13h11v10l-11-2z" fill="#fff" /></Svg></TaskButton>
    <TaskButton $low aria-label="搜索"><Svg s={21} c="#fff" w={1.7}><circle cx="14" cy="9" r="7.500" /><path d="M9 15l-8 8" /></Svg></TaskButton>
    {apps.map(([name, icon, on]) => (
      <TaskButton key={name} aria-label={name}><Svg s={20} w={1}>{icon}</Svg>{on && <Running />}</TaskButton>
    ))}
    <TaskButton $focus aria-label="GTJ"><Svg s={20} w={0}><rect x="0" y="0" width="24" height="24" rx="3" fill="#e2f4ff" /><path d="M4 5q8 2 16 0v4l-6 1v10h-4V10L4 9z" fill="#1a9bf0" /></Svg><Running $full /></TaskButton>
    <Tray>
      <TrayItem $w={62}><span>36%</span><span>内存占用</span></TrayItem>
      <TrayItem $w={30} aria-label="隐藏图标"><Svg s={16} w={2}><path d="M1 18L12 6l11 12" /></Svg></TrayItem>
      <TrayItem $w={31} aria-label="电池"><Svg s={20} w={1.5}><rect x="5" y="7" width="17" height="11" /><path d="M9 9h11v7H9z" fill="#fff" /><path d="M22 10h2v5h-2M1 5h5v4H1zM3 9v4M2 5V3M5 5V3" /></Svg></TrayItem>
      <TrayItem $w={29} aria-label="网络"><Svg s={18} w={1.5}><path d="M1 22Q3 4 22 2M7 22Q8 9 22 8M13 22q1-7 9-8" /><circle cx="20" cy="20" r="2" fill="#fff" /></Svg></TrayItem>
      <TrayItem $w={29} aria-label="静音"><Svg s={19} w={1.4}><path d="M1 9h4l5-5v16l-5-5H1zM15 8l8 8M23 8l-8 8" /></Svg></TrayItem>
      <ImeItem $w={32}>中</ImeItem>
      <TrayItem $w={40} aria-label="输入法"><Svg s={20} w={0}><rect x="1" y="2" width="22" height="21" rx="3" fill="#f0501e" transform="rotate(-8 12 12)" /><path d="M18 8Q7 4 7 9t10 4q1 6-11 3" fill="none" stroke="#fff" strokeWidth="3" /></Svg></TrayItem>
      <TrayItem $w={46} aria-label="内存 36">
        <svg width="27" height="27" viewBox="0 0 27 27" aria-hidden="true">
          <circle cx="13.500" cy="13.500" r="12" fill="#0fc864" stroke="#14d46c" strokeWidth="2" />
          <path d="M2.500 12a11 11 0 0 1 22 0z" fill="#2e4a38" />
          <text x="13.500" y="19" fontSize="14" textAnchor="middle" fill="#fff">36</text>
        </svg>
      </TrayItem>
      <TrayItem $w={96}><span>18:52 周二</span><span>2023/3/28</span></TrayItem>
      <TrayItem $w={56} aria-label="播放"><Svg s={20} w={1.6}><path d="M1 3h22v18H1z" /><path d="M9 7v10l7-5z" fill="#fff" /></Svg></TrayItem>
      <TrayItem $w={45} aria-label="通知"><Svg s={20} w={1.6}><path d="M1 2h22v17h-8l-3 4-3-4H1z" fill="#fff" /><path d="M5 7h14M5 11h14M5 15h9" stroke="#3b2f28" /></Svg></TrayItem>
      <TrayEdge />
    </Tray>
  </Taskbar>
);

const App = () => (
  <Page>
    <GlobalStyle />
    <TopHeader />
    <RibbonBar />
    <Options />
    <Workspace>
      <Navigator />
      <Splitter />
      <PanelColumn $w={349}>
        <ComponentList />
        <PropertyList />
      </PanelColumn>
      <Splitter><SplitHandle aria-label="收起左侧"><Svg s={6} box={6} w={0}><path d="M5 0v6L1 3z" fill="#c4cad0" /></Svg></SplitHandle></Splitter>
      <Canvas />
      <Splitter><SplitHandle aria-label="收起右侧"><Svg s={6} box={6} w={0}><path d="M1 0v6l4-3z" fill="#c4cad0" /></Svg></SplitHandle></Splitter>
      <DisplaySettings />
    </Workspace>
    <Status />
    <WindowsTaskbar />
  </Page>
);

export default App;
